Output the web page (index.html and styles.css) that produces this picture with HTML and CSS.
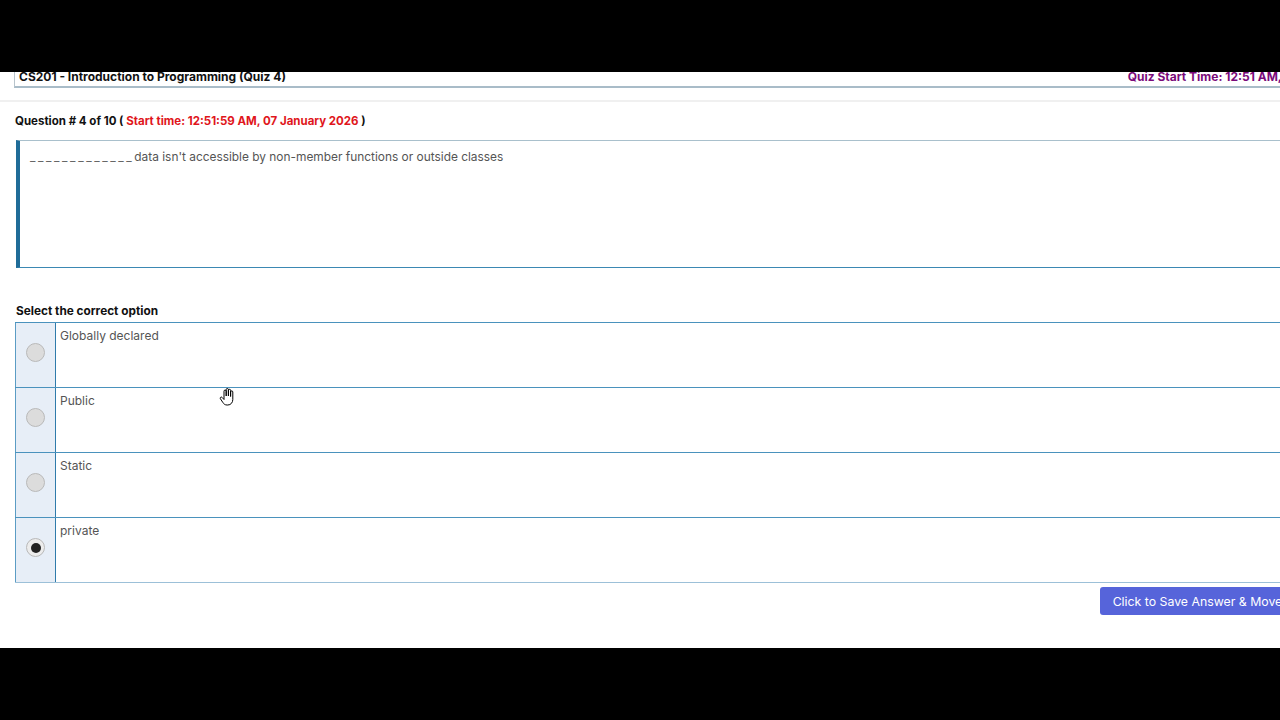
FILE: index.html
```html
<!DOCTYPE html>
<html lang="en">
<head>
  <meta charset="UTF-8" />
  <meta name="viewport" content="width=device-width, initial-scale=1.0"/>
  <title>CS201 Quiz 4</title>
  <link rel="stylesheet" href="styles.css">
</head>
<body>
  <div class="screen">
    <div class="page">
      <div class="quiz-head">
        <span class="course">CS201 - Introduction to Programming (Quiz 4)</span>
        <span class="quiz-time">Quiz Start Time: 12:51 AM, 07 January 2026</span>
      </div>
      <hr class="sep">

      <h4 class="q-title">Question # 4 of 10 ( <span class="start">Start time: 12:51:59 AM, 07 January 2026</span> )</h4>

      <div class="q-box"><span class="blank">_____________</span>data isn't accessible by non-member functions or outside classes</div>

      <h4 class="opt-title">Select the correct option</h4>
      <div class="options">
        <div class="opt">
          <div class="opt-radio"><span class="radio"></span></div>
          <div class="opt-text">Globally declared</div>
        </div>
        <div class="opt">
          <div class="opt-radio"><span class="radio"></span></div>
          <div class="opt-text">Public</div>
        </div>
        <div class="opt">
          <div class="opt-radio"><span class="radio"></span></div>
          <div class="opt-text">Static</div>
        </div>
        <div class="opt">
          <div class="opt-radio"><span class="radio checked"></span></div>
          <div class="opt-text">private</div>
        </div>
      </div>

      <div class="actions">
        <button class="save-btn">Click to Save Answer &amp; Move to Next Question</button>
      </div>

      <svg class="cursor" width="16" height="18" viewBox="0 0 16 18">
        <path d="M5 9V3.2a1.1 1.1 0 0 1 2.2 0V8V1.6a1.1 1.1 0 0 1 2.2 0V8V2.4a1.1 1.1 0 0 1 2.2 0V8.5V4a1.1 1.1 0 0 1 2.2 0v7.5c0 3-2 5.5-5 5.5H8c-2 0-3.2-1-4.2-2.6L1.3 10.6a1.1 1.1 0 0 1 1.8-1.2L5 11.5Z" fill="#fff" stroke="#000" stroke-width="1" stroke-linejoin="round"/>
      </svg>
    </div>
  </div>
</body>
</html>
```

FILE: styles.css
```css
body {
  margin: 0;
  background: #000;
  font-family: "Inter", "Noto Sans", sans-serif;
}

.screen {
  margin-top: 72px;
  height: 576px;
  background: #fff;
  overflow: hidden;
}

.page {
  position: relative;
  width: 1396px;
}

.quiz-head {
  display: flex;
  justify-content: space-between;
  margin-left: 14px;
  padding: 0 12px 2px 4px;
  height: 12px;
  border-left: 1px solid #b8c4cc;
  border-bottom: 2px solid #a9bcc8;
  font-size: 12px;
  font-weight: 700;
  line-height: 9px;
}

.course {
  color: #111;
}

.quiz-time {
  color: #7a0a7a;
}

.sep {
  margin: 12px 0 0;
  border: none;
  border-top: 2px solid #f0f0f0;
}

.q-title {
  margin: 12px 0 0 15px;
  font-size: 11.5px;
  font-weight: 700;
  color: #111;
  line-height: 14px;
}

.start {
  color: #e0161c;
}

.q-box {
  margin: 12px 0 0 16px;
  height: 106px;
  padding: 10px 10px;
  border-left: 4px solid #1f6c98;
  border-top: 1px solid #a9c0cc;
  border-bottom: 1px solid #3b88b3;
  font-size: 11.9px;
  color: #555;
  line-height: 12px;
}

.blank {
  letter-spacing: 2.6px;
  color: #666;
}

.opt-title {
  margin: 36px 0 0 16px;
  font-size: 11.8px;
  font-weight: 700;
  color: #111;
  line-height: 14px;
}

.options {
  margin: 4px 0 0 15px;
  border-bottom: 1px solid #9cc0d8;
}

.opt {
  display: flex;
  height: 64px;
  border-top: 1px solid #4a92bd;
}

.opt-radio {
  width: 41px;
  flex-shrink: 0;
  display: flex;
  justify-content: center;
  align-items: flex-start;
  padding-top: 20px;
  box-sizing: border-box;
  background: #e7eef7;
  border-left: 1px solid #5b9cc4;
  border-right: 1px solid #2f7bab;
}

.radio {
  width: 19px;
  height: 19px;
  border-radius: 50%;
  background: #dcdcdc;
  border: 1px solid #b9b9b9;
  box-sizing: border-box;
}

.radio.checked {
  background: #ececec;
  display: flex;
  justify-content: center;
  align-items: center;
}

.radio.checked::after {
  content: "";
  width: 10px;
  height: 10px;
  border-radius: 50%;
  background: #222;
}

.opt-text {
  padding: 5px 0 0 4px;
  font-size: 12px;
  color: #555;
}

.actions {
  display: flex;
  justify-content: flex-end;
  margin-top: 4px;
}

.save-btn {
  height: 28px;
  padding: 0 13px;
  background: #5664da;
  color: #fff;
  border: none;
  border-radius: 3px;
  font-family: inherit;
  font-size: 12.3px;
}

.cursor {
  position: absolute;
  left: 219px;
  top: 316px;
}
```
